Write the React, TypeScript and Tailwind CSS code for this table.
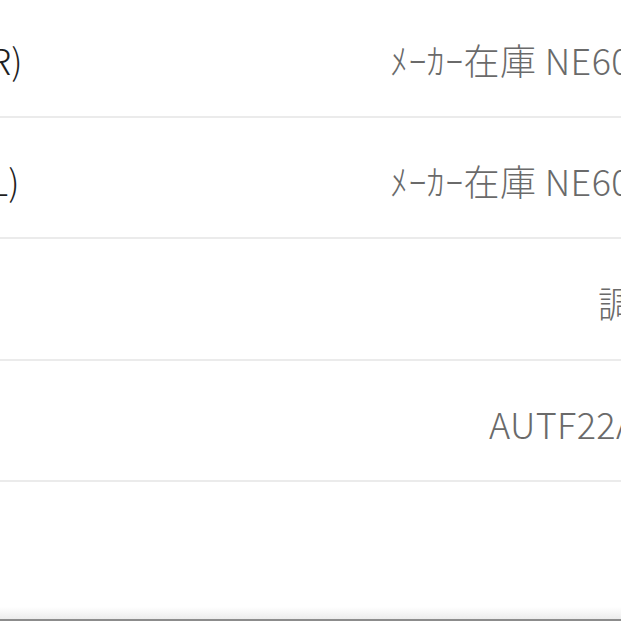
import React from 'react';

type Row = {
  label: string;
  value: string;
  offset: number;
};

const rows: Row[] = [
  { label: '(R)', value: 'ﾒｰｶｰ在庫 NE6000000', offset: 390 },
  { label: '(L)', value: 'ﾒｰｶｰ在庫 NE6000001', offset: 390 },
  { label: '', value: '調整中', offset: 598 },
  { label: '', value: 'AUTF22A', offset: 489 },
  { label: '', value: '', offset: 0 },
];

export default function App() {
  return (
    <div
      className="relative w-[621px] h-[621px] overflow-hidden bg-white"
      style={{ fontFamily: '"Noto Sans CJK JP", "Noto Sans", sans-serif' }}
    >
      <div className="mt-[-4px]">
        {rows.map((row, i) => (
          <div
            key={i}
            className={
              i < rows.length - 1
                ? 'relative h-[121.5px] border-b-2 border-[#ebebeb] whitespace-nowrap'
                : 'relative h-[121.5px] whitespace-nowrap'
            }
          >
            {row.label && (
              <span className="absolute left-[-22px] top-[calc(50%+3px)] -translate-y-1/2 text-[36px] font-light text-[#1f1f1f] leading-none">
                {row.label}
              </span>
            )}
            {row.value && (
              <span
                className="absolute top-[calc(50%+3px)] -translate-y-1/2 text-[36px] font-light text-[#6a6a6a] leading-none tracking-[0.4px]"
                style={{ left: row.offset }}
              >
                {row.value}
              </span>
            )}
          </div>
        ))}
      </div>

      {/* bottom toolbar edge */}
      <div className="absolute bottom-0 left-0 right-0">
        <div className="h-[12px] bg-gradient-to-b from-white to-[#ececec]" />
        <div className="h-[2px] bg-[#8c8c8c]" />
      </div>
    </div>
  );
}
